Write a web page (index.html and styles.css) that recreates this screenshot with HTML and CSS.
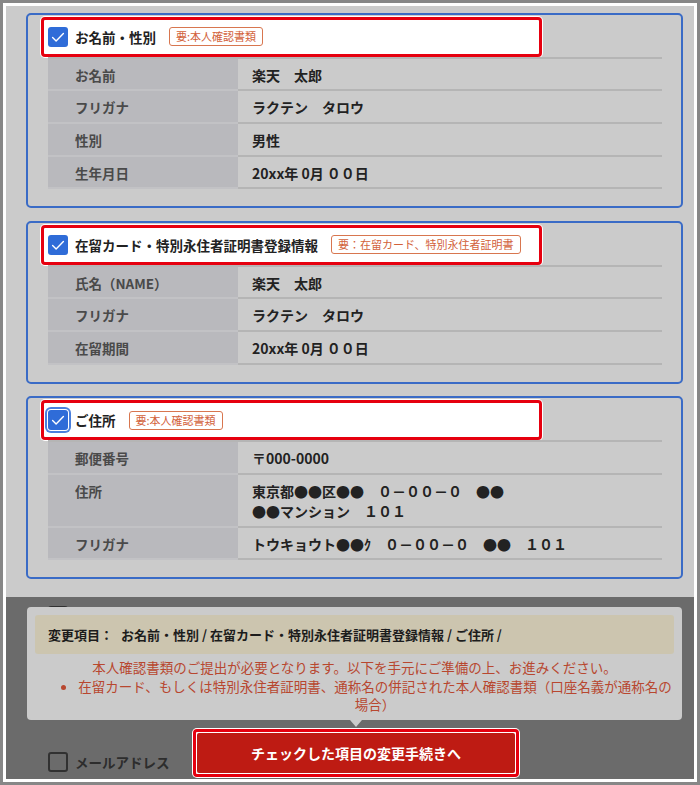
FILE: index.html
```html
<!DOCTYPE html>
<html lang="ja">
<head>
<meta charset="utf-8">
<title>変更項目の確認</title>
<link rel="stylesheet" href="styles.css">
</head>
<body>
<div class="frame">
  <main class="page">
    <section class="card">
      <div class="card-head">
        <span class="cb cb-on"><svg viewBox="0 0 20 20" width="20" height="20"><path d="M4.6 10.6 L8.1 14 L15.4 6.6" fill="none" stroke="#fff" stroke-width="1.4" stroke-linecap="round" stroke-linejoin="round"/></svg></span>
        <span class="card-title">お名前・性別</span>
        <span class="badge">要:本人確認書類</span>
      </div>
      <dl class="rows">
        <div class="row"><dt>お名前</dt><dd>楽天　太郎</dd></div>
        <div class="row"><dt>フリガナ</dt><dd>ラクテン　タロウ</dd></div>
        <div class="row"><dt>性別</dt><dd>男性</dd></div>
        <div class="row"><dt>生年月日</dt><dd>20xx年 0月 ００日</dd></div>
      </dl>
    </section>

    <section class="card">
      <div class="card-head">
        <span class="cb cb-on"><svg viewBox="0 0 20 20" width="20" height="20"><path d="M4.6 10.6 L8.1 14 L15.4 6.6" fill="none" stroke="#fff" stroke-width="1.4" stroke-linecap="round" stroke-linejoin="round"/></svg></span>
        <span class="card-title">在留カード・特別永住者証明書登録情報</span>
        <span class="badge">要：在留カード、特別永住者証明書</span>
      </div>
      <dl class="rows">
        <div class="row"><dt>氏名（NAME）</dt><dd>楽天　太郎</dd></div>
        <div class="row"><dt>フリガナ</dt><dd>ラクテン　タロウ</dd></div>
        <div class="row"><dt>在留期間</dt><dd>20xx年 0月 ００日</dd></div>
      </dl>
    </section>

    <section class="card">
      <div class="card-head">
        <span class="cb cb-on cb-focus"><svg viewBox="0 0 20 20" width="20" height="20"><path d="M4.6 10.6 L8.1 14 L15.4 6.6" fill="none" stroke="#fff" stroke-width="1.4" stroke-linecap="round" stroke-linejoin="round"/></svg></span>
        <span class="card-title">ご住所</span>
        <span class="badge">要:本人確認書類</span>
      </div>
      <dl class="rows">
        <div class="row"><dt>郵便番号</dt><dd>〒000-0000</dd></div>
        <div class="row"><dt>住所</dt><dd>東京都●●区●●　０－００－０　●●<br>●●マンション　１０１</dd></div>
        <div class="row"><dt>フリガナ</dt><dd>トウキョウト●●ｸ　０－００－０　●●　１０１</dd></div>
      </dl>
    </section>

    <ul class="items">
      <li class="item"><span class="cb cb-off"></span></li>
      <li class="item item-mail"><span class="cb cb-off"></span><span>メールアドレス</span></li>
    </ul>
  </main>

  <div class="sheet">
    <div class="tip">
      <p class="tip-items"><span class="tip-key">変更項目：</span>お名前・性別 / 在留カード・特別永住者証明書登録情報 / ご住所 /</p>
      <p class="tip-note">本人確認書類のご提出が必要となります。以下を手元にご準備の上、お進みください。</p>
      <ul class="tip-list">
        <li>在留カード、もしくは特別永住者証明書、通称名の併記された本人確認書類（口座名義が通称名の場合）</li>
      </ul>
    </div>
    <div class="btn-hl"><button class="btn" type="button">チェックした項目の変更手続きへ</button></div>
  </div>
</div>
</body>
</html>
```

FILE: styles.css
```css
html, body {
  margin: 0;
  padding: 0;
}
body {
  background: #878787;
  width: 700px;
  height: 785px;
  overflow: hidden;
  font-family: "Noto Sans CJK JP", "Noto Sans", sans-serif;
  color: #222;
}
.frame {
  position: relative;
  margin: 3px;
  border: 3px solid #fff;
  height: 773px;
  background: #cbcbcb;
  overflow: hidden;
}
.page {
  padding: 6.5px 11px 0 20px;
}
.card {
  border: 2px solid #3a6bc6;
  border-radius: 5px;
  padding: 2px 0 17px;
  margin-bottom: 12.5px;
}
.card-head {
  box-sizing: border-box;
  height: 40px;
  width: 501px;
  margin-left: 13px;
  border: 3px solid #e6000f;
  border-radius: 4px;
  background: #fff;
  box-shadow: 0 0 0 1px #fff;
  display: flex;
  align-items: center;
  padding-left: 4px;
}
.cb {
  box-sizing: border-box;
  width: 20px;
  height: 20px;
  border-radius: 3px;
  flex: none;
  display: block;
}
.cb svg {
  display: block;
}
.cb-on {
  background: #2f6cd8;
}
.cb-focus {
  box-shadow: 0 0 0 1px #fff, 0 0 0 3px #4a7fdc;
}
.cb-off {
  border: 2px solid #5e5e5e;
}
.card-title {
  margin-left: 7px;
  font-size: 13.5px;
  font-weight: 700;
  color: #222;
  line-height: 20px;
}
.badge {
  margin-left: 13px;
  border: 1px solid #d8764f;
  border-radius: 3px;
  padding: 0 6px;
  font-size: 11px;
  line-height: 17px;
  color: #d2613a;
  background: #fff;
}
.rows {
  margin: 0 0 0 20px;
  width: 614px;
  border-top: 2px solid #b5b5b5;
}
.row {
  display: grid;
  grid-template-columns: 190px 1fr;
}
.row dt {
  background: #b9b9bd;
  padding: 6px 0 4.7px 27px;
  border-bottom: 2px solid #c2c2c5;
  font-size: 13.5px;
  line-height: 20px;
  font-weight: 700;
  color: #4a4a4a;
}
.row dd {
  margin: 0;
  padding: 6px 14px 4.7px;
  border-bottom: 2px solid #b5b5b5;
  font-size: 14px;
  line-height: 20px;
  font-weight: 700;
  color: #222;
}
.items {
  list-style: none;
  margin: 27px 0 0 22px;
  padding: 0;
}
.item {
  display: flex;
  align-items: center;
  gap: 7px;
  height: 20px;
  font-size: 13.5px;
  font-weight: 700;
  color: #555;
}
.item-mail {
  margin-top: 126px;
}
.sheet {
  position: absolute;
  left: 0;
  right: 0;
  top: 591px;
  bottom: 0;
  background: rgba(0, 0, 0, 0.47);
  padding-top: 10px;
}
.tip {
  position: relative;
  margin-left: 21px;
  width: 655px;
  box-sizing: border-box;
  padding: 8px 8px 6.5px;
  background: #cbcbcb;
  border-radius: 4px;
}
.tip::after {
  content: "";
  position: absolute;
  left: 323px;
  bottom: -7px;
  border-left: 6px solid transparent;
  border-right: 6px solid transparent;
  border-top: 7px solid #cbcbcb;
}
.tip-items {
  margin: 0;
  background: #ccc5af;
  border-radius: 3px;
  padding: 10px 13px;
  font-size: 13px;
  line-height: 19.3px;
  font-weight: 700;
  color: #1c1c1c;
}
.tip-key {
  margin-right: 8px;
}
.tip-note {
  margin: 4px 0 0;
  text-align: center;
  font-size: 13.5px;
  line-height: 18.5px;
  color: #b8472f;
}
.tip-list {
  margin: 0;
  padding: 0 2px 0 43px;
  text-align: center;
  font-size: 13.5px;
  line-height: 18.5px;
  color: #b8472f;
}
.btn-hl {
  margin: 9px 0 0 187px;
  width: fit-content;
  border: 3px solid #e6000f;
  border-radius: 4px;
  padding: 1px;
  background: #fff;
  box-shadow: 0 0 0 1px #fff;
}
.btn {
  display: block;
  width: 318px;
  height: 40px;
  border: none;
  border-radius: 2px;
  background: #be1b13;
  color: #fff;
  font-family: inherit;
  font-size: 14px;
  font-weight: 700;
  padding: 0;
}
```
